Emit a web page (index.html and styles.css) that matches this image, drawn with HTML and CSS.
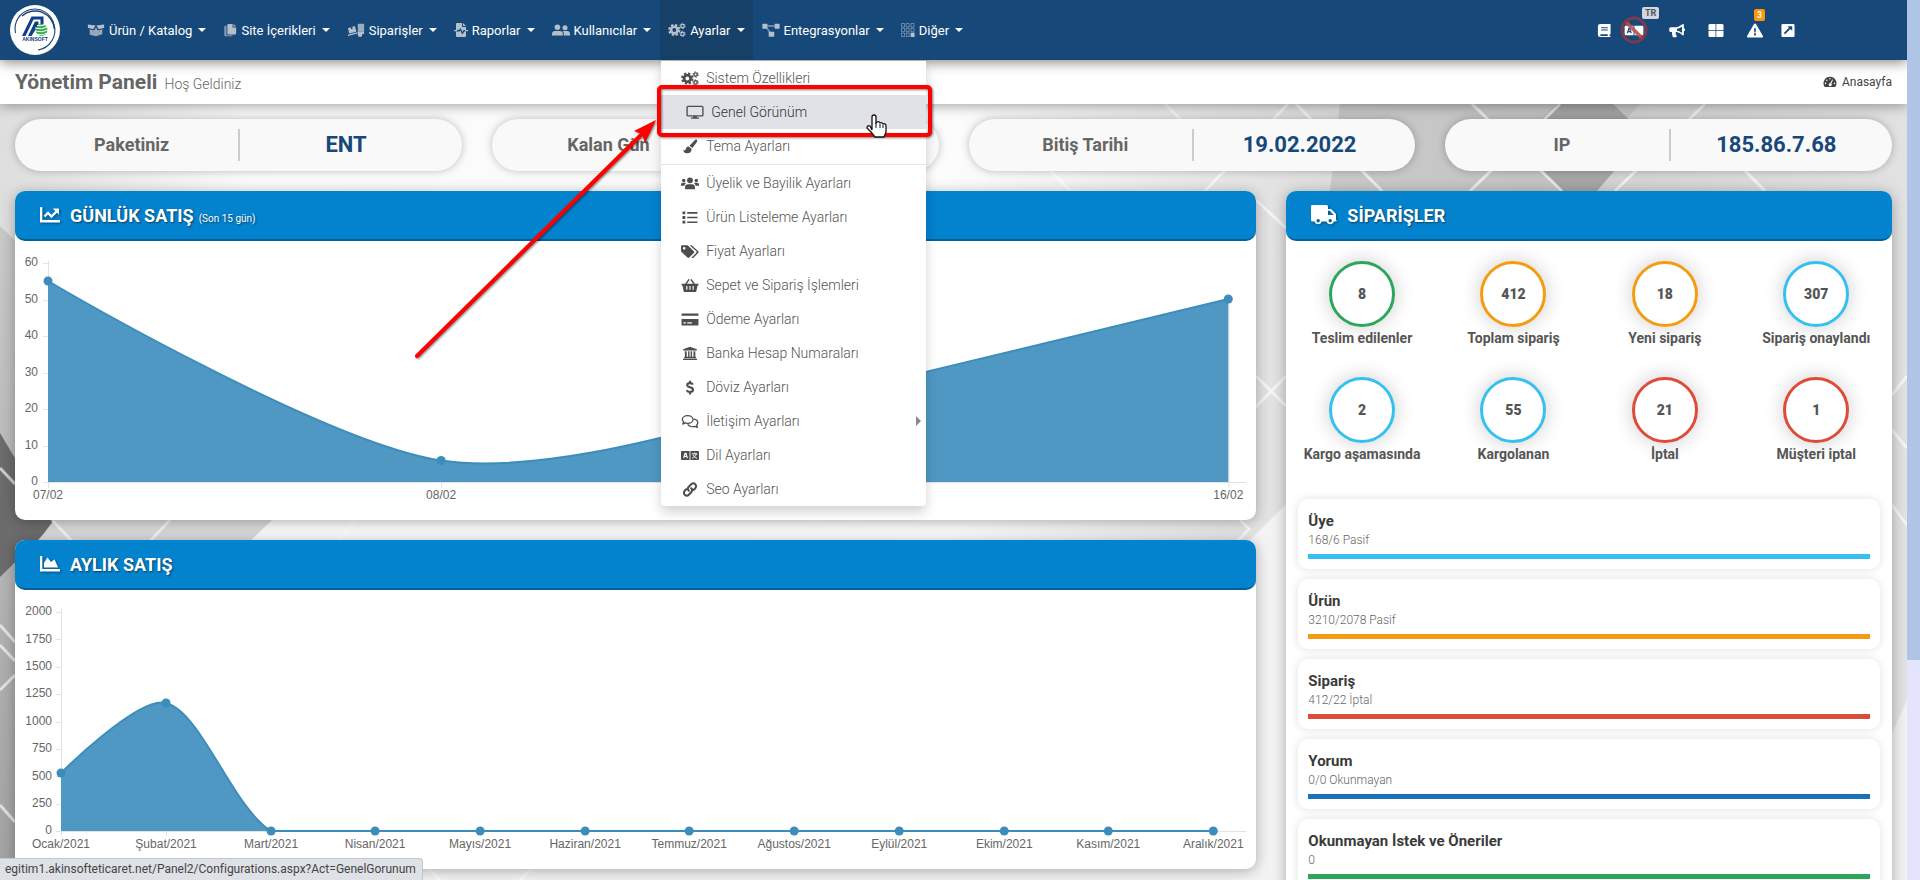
FILE: index.html
```html
<!DOCTYPE html>
<html lang="tr">
<head>
<meta charset="utf-8">
<meta name="viewport" content="width=device-width, initial-scale=1">
<title>Yönetim Paneli</title>
<link rel="stylesheet" href="styles.css">
</head>
<body>
<svg class="sprite" aria-hidden="true">
  <symbol id="i-cogs" viewBox="0 0 20 16">
    <circle cx="7" cy="8" r="3.6" fill="none" stroke="currentColor" stroke-width="3"/>
    <circle cx="7" cy="8" r="5.6" fill="none" stroke="currentColor" stroke-width="2.4" stroke-dasharray="2.6 1.8"/>
    <g fill="none" stroke="currentColor"><circle cx="16.2" cy="3.6" r="1.9" stroke-width="1.5"/><circle cx="16.2" cy="3.6" r="3" stroke-width="1" stroke-dasharray="1.6 1.54"/><circle cx="16.2" cy="12.4" r="1.9" stroke-width="1.5"/><circle cx="16.2" cy="12.4" r="3" stroke-width="1" stroke-dasharray="1.6 1.54"/></g>
  </symbol>
  <symbol id="i-box" viewBox="0 0 20 16">
    <path fill="currentColor" d="M1 2l8.6 1-2.300 3.600a1 1 0 0 1-1.100.4L1 5.700zM19 2l-8.600 1 2.300 3.600a1 1 0 0 0 1.100.4L19 5.700z"/>
    <path fill="currentColor" opacity=".8" d="M3 7.200l3.600 1a1.500 1.500 0 0 0 1.700-.6L10 5l1.700 2.600a1.500 1.500 0 0 0 1.700.6l3.600-1v5.600L10 15l-7-1.700z"/>
  </symbol>
  <symbol id="i-copy" viewBox="0 0 16 16">
    <path fill="currentColor" d="M6 1h5v4h4v7a1 1 0 0 1-1 1H6a1 1 0 0 1-1-1V2a1 1 0 0 1 1-1zM12 1l3 3h-3z"/>
    <path fill="currentColor" opacity=".7" d="M4 3H2.500a1 1 0 0 0-1 1v10a1 1 0 0 0 1 1H10a1 1 0 0 0 1-1H5a1 1 0 0 1-1-1z"/>
  </symbol>
  <symbol id="i-dolly" viewBox="0 0 20 16">
    <path fill="currentColor" opacity=".85" d="M13 1h5a1 1 0 0 1 1 1v8h-7V2a1 1 0 0 1 1-1z"/>
    <path fill="currentColor" d="M1 6l3-1 .6 2 1.800-.5-.6-2 3-1L10.400 10 2.500 12zM.8 13.200L11.600 10.400V12L1.200 14.800zM12 10h7v2.500h-2.200a2.500 2.500 0 1 1-4.800.3z"/>
  </symbol>
  <symbol id="i-report" viewBox="0 0 14 16">
    <path fill="currentColor" d="M3 1h5v4h4v3H9.500L8.500 10 6.500 6 5 8H2V2a1 1 0 0 1 1-1zM9 1l3 3H9zM2 9.500h3.500l.8-1L8.300 12.500l2-3H12V14a1 1 0 0 1-1 1H3a1 1 0 0 1-1-1z"/>
    <path fill="currentColor" d="M0 8h3v1.200H0zM11 8h3v1.200h-3z"/>
  </symbol>
  <symbol id="i-friends" viewBox="0 0 20 16">
    <circle cx="6" cy="5" r="3.100" fill="currentColor"/><circle cx="14.500" cy="5.400" r="2.800" fill="currentColor"/>
    <path fill="currentColor" d="M0 14v-1.600A3.400 3.400 0 0 1 3.400 9h5.200a3.400 3.400 0 0 1 3.400 3.400V14zM13 14v-2a5 5 0 0 0-1-3h4.800a3.200 3.200 0 0 1 3.200 3.200V14z"/>
  </symbol>
  <symbol id="i-project" viewBox="0 0 20 16">
    <path fill="currentColor" d="M1 1h4.500a.6.600 0 0 1 .6.600v4.300a.6.600 0 0 1-.6.600H1a.6.600 0 0 1-.6-.6V1.600A.6.600 0 0 1 1 1zM14.600 1H19a.6.600 0 0 1 .6.600v4.300a.6.600 0 0 1-.6.600h-4.400a.6.600 0 0 1-.6-.6V1.600a.6.600 0 0 1 .6-.6zM8 10h5a.6.600 0 0 1 .6.600v4.400a.6.600 0 0 1-.6.600H8a.6.600 0 0 1-.6-.6v-4.400A.6.600 0 0 1 8 10z"/>
    <path fill="none" stroke="currentColor" stroke-width="1.600" opacity=".7" d="M6 3.500h8M5.500 6l3.300 4.600"/>
  </symbol>
  <symbol id="i-grid" viewBox="0 0 14 16">
    <path fill="none" stroke="currentColor" stroke-width=".7" opacity=".75" d="M.5 1.500h3v3.500h-3zM5.200 1.500h3v3.500h-3zM10 1.500h3v3.500h-3zM.5 6.200h3v3.500h-3zM5.200 6.200h3v3.500h-3zM10 6.200h3v3.500h-3zM.5 11h3v3.500h-3zM5.200 11h3v3.500h-3z"/>
    <path fill="currentColor" d="M9.600 10.600h4v4.400h-4z"/>
  </symbol>
  <symbol id="i-desktop" viewBox="0 0 20 16">
    <rect x="1.200" y="1.200" width="17.600" height="10.600" rx="1" fill="none" stroke="currentColor" stroke-width="1.500"/>
    <path fill="currentColor" d="M8 12h4v1.500h2.500V15h-9v-1.500H8z"/>
  </symbol>
  <symbol id="i-brush" viewBox="0 0 16 16">
    <path fill="currentColor" d="M15.200.9c.7.600.6 1.400.1 2.200L10.600 9.600 7.400 7.200 13 1.400c.7-.7 1.500-1 2.200-.5zM6.600 8l3.100 2.300c.2 3-2 5-5 5C2 15.300.9 13 .8 11.600c2 1.300 2.600-.3 2.900-1.600C4.100 8.600 5.300 8 6.600 8z"/>
  </symbol>
  <symbol id="i-users" viewBox="0 0 20 16">
    <g fill="currentColor"><circle cx="10" cy="4.500" r="3.200"/><circle cx="3" cy="4.600" r="1.900"/><circle cx="17" cy="4.600" r="1.900"/>
    <path d="M4.500 14.500v-2.300A3.400 3.400 0 0 1 7.900 8.800h4.200a3.400 3.400 0 0 1 3.400 3.400v2.300zM0 10.500V9.200a2 2 0 0 1 2-2h2.200c.5 0 1 .2 1.300.5A5 5 0 0 0 3.700 10.500zM20 10.500V9.200a2 2 0 0 0-2-2h-2.200c-.5 0-1 .2-1.300.5a5 5 0 0 1 1.800 2.800z"/></g>
  </symbol>
  <symbol id="i-list" viewBox="0 0 16 16">
    <path fill="currentColor" d="M0 1.500h3v3H0zM0 6.500h3v3H0zM0 11.500h3v3H0zM5 2.200h11v1.700H5zM5 7.200h11v1.700H5zM5 12.200h11v1.700H5z"/>
  </symbol>
  <symbol id="i-tags" viewBox="0 0 20 16">
    <path fill="currentColor" fill-rule="evenodd" d="M0 2.300A1.300 1.300 0 0 1 1.300 1h5.400c.4 0 .8.200 1 .4l6.600 6.300a1.300 1.300 0 0 1 0 1.900l-5.200 5.200a1.300 1.300 0 0 1-1.900 0L.4 8.300a1.300 1.300 0 0 1-.4-1zM3.500 3a1.500 1.500 0 1 0 0 3 1.500 1.500 0 0 0 0-3z"/>
    <path fill="currentColor" d="M9.500 1h1.700c.4 0 .7.200 1 .4l6.900 6.300a1.300 1.300 0 0 1 0 1.900l-5.300 5.300a1.300 1.300 0 0 1-1.800 0l-.2-.2 5-5a1.700 1.700 0 0 0 0-2.300z"/>
  </symbol>
  <symbol id="i-basket" viewBox="0 0 18 16">
    <path fill="none" stroke="currentColor" stroke-width="1.600" d="M4.500 6.500L8 1.500M13.500 6.500L10 1.500"/>
    <path fill="currentColor" fill-rule="evenodd" d="M0 6h18v2h-1l-1.300 6.300a1 1 0 0 1-1 .7H3.300a1 1 0 0 1-1-.7L1 8H0zM5 8.500v4h1.200v-4zM8.400 8.500v4h1.200v-4zM11.800 8.500v4H13v-4z"/>
  </symbol>
  <symbol id="i-card" viewBox="0 0 18 16">
    <path fill="currentColor" fill-rule="evenodd" d="M1 1.500h16a1 1 0 0 1 1 1V4H0V2.500a1 1 0 0 1 1-1zM0 7.500h18v6a1 1 0 0 1-1 1H1a1 1 0 0 1-1-1zM2 11v1.300h2.500V11zM6 11v1.300h5V11z"/>
  </symbol>
  <symbol id="i-bank" viewBox="0 0 16 16">
    <path fill="currentColor" d="M8 .8L15.300 3.500v1.300H.7V3.500zM2.500 5.500h2v6h1.500v-6h1.500v6h1.200v-6h1.500v6h1.500v-6h2v6l.8.500v1H1.700v-1l.8-.5zM.5 13.700h15V15H.5z"/>
  </symbol>
  <symbol id="i-dollar" viewBox="0 0 16 16">
    <path fill="none" stroke="currentColor" stroke-width="2.200" d="M11 5c-.5-1.300-1.700-1.700-3-1.700-1.900 0-3 .9-3 2.100 0 3.200 6.200 1.700 6.200 5 0 1.400-1.200 2.300-3.200 2.300-1.700 0-2.900-.7-3.400-2M8 .7V3.500M8 12.500v2.900"/>
  </symbol>
  <symbol id="i-chat" viewBox="0 0 18 16">
    <path fill="none" stroke="currentColor" stroke-width="1.400" stroke-linejoin="round" d="M6.500 1.700c3.200 0 5.700 1.800 5.700 4.100s-2.500 4.100-5.700 4.100c-.9 0-1.700-.1-2.400-.4L1.300 10.700 2.300 8.300C1.300 7.600.8 6.800.8 5.800c0-2.300 2.500-4.100 5.700-4.100zM13 5.500c2.500.3 4.300 1.900 4.300 3.900 0 1-.5 1.800-1.300 2.500l.9 2.300-2.700-1.100c-3 1-6.400.1-7.700-2"/>
  </symbol>
  <symbol id="i-lang" viewBox="0 0 20 16">
    <path fill="currentColor" fill-rule="evenodd" d="M1 3h8.500v10H1a1 1 0 0 1-1-1V4a1 1 0 0 1 1-1zM4 5L2.300 11h1.300l.3-1.200h2.200l.3 1.200h1.300L6 5zM5 6.500l.6 2.100H4.400zM10.500 3H19a1 1 0 0 1 1 1v8a1 1 0 0 1-1 1h-8.500z"/>
    <path fill="none" class="knock" stroke-width="1.100" d="M12 6.200h6.200M15.100 4.700v1.500M17 6.200c-.6 2.400-2.400 4-4.600 4.900M13.500 7.500c.8 1.700 2.200 2.900 4.300 3.600"/>
  </symbol>
  <symbol id="i-link" viewBox="0 0 16 16">
    <path fill="none" stroke="currentColor" stroke-width="2.200" stroke-linecap="round" d="M6.700 9.300a3 3 0 0 1 0-4.200l2.600-2.700a3 3 0 0 1 4.300 4.200l-1.500 1.600M9.300 6.700a3 3 0 0 1 0 4.200l-2.600 2.700a3 3 0 0 1-4.300-4.200l1.500-1.600"/>
  </symbol>
  <symbol id="i-book" viewBox="0 0 14 16">
    <path fill="currentColor" fill-rule="evenodd" d="M3 1h11v11h-1v2h1v1H3a2.500 2.500 0 0 1-2.500-2.500v-9A2.500 2.500 0 0 1 3 1zM4 4.500v1h7v-1zM4 7v1h7V7zM3.500 12a1 1 0 0 0 0 1.800H11V12z"/>
  </symbol>
  <symbol id="i-horn" viewBox="0 0 18 16">
    <path fill="currentColor" fill-rule="evenodd" d="M15.500 1c.5 0 .8.400.8.900V5.500a1.700 1.700 0 0 1 0 3.300v3.700c0 .7-.8 1.100-1.400.6l-2.300-1.800A8 8 0 0 0 8 9.700l-.4 0c-.2 1.500.2 2.800 1 3.900.5.600 0 1.600-.8 1.600H5.300a1 1 0 0 1-.9-.6c-.7-1.500-.9-3.200-.7-4.900H2.500A1.800 1.800 0 0 1 .7 8V6.200a1.800 1.800 0 0 1 1.800-1.800H8a8 8 0 0 0 4.600-1.700l2.300-1.500zM14.300 3.700l-.7.500A9.400 9.400 0 0 1 9 6v2.300a9 9 0 0 1 4.600 1.700l.7.500z"/>
  </symbol>
  <symbol id="i-table" viewBox="0 0 16 16">
    <path fill="currentColor" d="M1.500 1h6v6.500H0v-5A1.500 1.500 0 0 1 1.500 1zM8.300 1h6.200A1.500 1.500 0 0 1 16 2.500v5H8.300zM0 8.300h7.500V15h-6A1.500 1.500 0 0 1 0 13.500zM8.300 8.300H16v5.200a1.500 1.500 0 0 1-1.500 1.500H8.300z"/>
  </symbol>
  <symbol id="i-warn" viewBox="0 0 18 16">
    <path fill="currentColor" fill-rule="evenodd" d="M10.200 1.300l7.100 12.200a1.200 1.200 0 0 1-1.100 1.900H1.800a1.200 1.200 0 0 1-1.100-1.900L7.800 1.300a1.400 1.400 0 0 1 2.400 0zM8 5.500l.3 4.700h1.400l.3-4.700zM9 11a1.200 1.200 0 1 0 0 2.400A1.200 1.200 0 0 0 9 11z"/>
  </symbol>
  <symbol id="i-external" viewBox="0 0 14 16">
    <path fill="currentColor" fill-rule="evenodd" d="M1.500 1h11A1.500 1.500 0 0 1 14 2.500v11a1.500 1.500 0 0 1-1.500 1.500h-11A1.500 1.500 0 0 1 0 13.500v-11A1.500 1.500 0 0 1 1.500 1zM6.500 3.500L8 5 2.500 10.600l1.400 1.500L9.500 6.500 11.500 8.300V3.500z"/>
  </symbol>
  <symbol id="i-gauge" viewBox="0 0 16 14">
    <path fill="currentColor" fill-rule="evenodd" d="M8 1a7.500 7.500 0 0 1 6.600 11.200c-.2.400-.5.500-.8.500H2.200c-.3 0-.6-.1-.8-.5A7.500 7.500 0 0 1 8 1zM8 2.300a.9.900 0 1 0 0 1.800.9.900 0 0 0 0-1.800zM4.200 4a.9.900 0 1 0 0 1.800.9.900 0 0 0 0-1.800zM2.800 7.700a.9.900 0 1 0 0 1.800.9.900 0 0 0 0-1.800zM13.200 7.700a.9.900 0 1 0 0 1.800.9.900 0 0 0 0-1.800zM10.600 4L8.200 8.500a1.700 1.700 0 1 0 1.300.5l2-4.500z"/>
  </symbol>
  <symbol id="i-line" viewBox="0 0 20 16">
    <path fill="currentColor" d="M0 0h2.300v13H20v2.500H0z"/>
    <path fill="none" stroke="currentColor" stroke-width="2.400" d="M4.500 9.500L8 6l3.500 3.500 5-5"/><path fill="currentColor" d="M12.800 1.500H19v6.200z"/>
  </symbol>
  <symbol id="i-area" viewBox="0 0 20 16">
    <path fill="currentColor" d="M0 0h2.300v13H20v2.500H0zM4 11.500V7l3.500-5.500L11 6l3.500-2.500 3.700 8z"/>
  </symbol>
  <symbol id="i-truck" viewBox="0 0 26 20">
    <path fill="currentColor" fill-rule="evenodd" d="M1.500 0h14A1.500 1.500 0 0 1 17 1.500V4h2.500c.4 0 .8.200 1.100.5l3.900 3.900c.3.300.5.700.5 1.100V15h.5v1.500h-2.800a3.600 3.600 0 0 1-7 0h-5a3.600 3.600 0 0 1-7 0H1.500A1.500 1.500 0 0 1 0 15V1.500A1.500 1.500 0 0 1 1.500 0zM17 5.800V10h5.800l-3.900-4.200zM7.200 14a1.700 1.700 0 1 0 0 3.400 1.700 1.700 0 0 0 0-3.400zM19.200 14a1.700 1.700 0 1 0 0 3.400 1.700 1.700 0 0 0 0-3.400z"/>
  </symbol>
</svg>

<div class="window">
<div class="page">
  <svg class="backdrop" viewBox="0 0 1907 880" preserveAspectRatio="xMidYMid slice" aria-hidden="true">
    <defs>
      <linearGradient id="bg-base" x1="0" y1="0" x2="1" y2="0">
        <stop offset="0" stop-color="#dedede"/><stop offset=".13" stop-color="#fbfbfb"/><stop offset=".5" stop-color="#fcfcfc"/><stop offset=".62" stop-color="#e9e9e9"/><stop offset=".8" stop-color="#cfcfcf"/><stop offset="1" stop-color="#e2e2e2"/>
      </linearGradient>
      <linearGradient id="bg-left" x1="0" y1="0" x2="0" y2="1">
        <stop offset="0" stop-color="#c9c9c9"/><stop offset="1" stop-color="#a2a2a2"/>
      </linearGradient>
    </defs>
    <rect width="1907" height="880" fill="url(#bg-base)"/>
    <path fill="url(#bg-left)" d="M0 226L240 460 40 880H0z"/>
    <path fill="#6c6c6c" d="M0 433L54 524 0 577z"/>
    <path fill="#dadada" d="M54 520L38 541H250L272 520z"/>
    <path fill="#f3f3f3" d="M60 840H1300L1500 500V880H60zM1250 540L1290 500V880H1250z"/>
    <path fill="#bdbdbd" d="M1340 104H1640L1560 191H1330z" opacity=".6"/>
    <path fill="#a6a6a6" d="M1557 104H1613L1645 135 1597 191H1562L1515 145z"/>
    <path fill="#f1f1f1" d="M1880 760L1907 700V880H1880z"/>
    <g fill="none" stroke="#fff" stroke-width="3" opacity=".65">
      <path d="M1472 104L1562 191M1560 104L1470 191M1705 104L1615 191M1700 125L1765 191M1288 104L1205 191M1296 104L1382 191M1165 104L1185 124M1050 170L1070 191M1256 200L1286 228M1256 376L1286 406M1256 407L1286 376M1240 520L1249 529 1238 541M1892 430L1907 448M1892 505L1907 525M1892 395L1907 376M0 468L15 484M52 520L72 541M170 520L150 541M355 520L338 541M0 625L15 642M0 645L15 661M0 690L15 675M0 805L15 822M430 870L440 880M530 870L520 880"/>
    </g>
  </svg>

  <header class="navbar">
    <a class="logo" href="#" aria-label="Akınsoft">
      <svg viewBox="0 0 50 50">
        <circle cx="25" cy="25" r="25" fill="#fff"/>
        <path d="M5.500 28A19.500 19.500 0 0 1 44 19.500 20 20 0 0 1 28 45" fill="none" stroke="#17487a" stroke-width="1.100"/>
        <path d="M12 11A19.500 19.500 0 0 1 44.500 24" fill="none" stroke="#17487a" stroke-width="1.600"/>
        <path d="M12 31L21.500 11.500H33.500V19H30.500V14.500H23.500L15.500 31zM18 31L25 16.500H28.500V20L21.500 31z" fill="#113f86"/>
        <circle cx="31.500" cy="25" r="6" fill="#2fae4d"/>
        <path d="M25 23q6 2 13-1M25 26q7 2 13-1M26 29q6 2 12-1M27 20.500q5 1 9-1" stroke="#fff" stroke-width="1" fill="none"/>
        <text x="25" y="36" text-anchor="middle" class="logo-text">AKINSOFT</text>
      </svg>
    </a>
    <nav class="menu">
      <div class="menu-item"><button class="menu-btn" type="button"><svg class="i20"><use href="#i-box"/></svg>Ürün / Katalog<i class="caret"></i></button></div>
      <div class="menu-item"><button class="menu-btn" type="button"><svg class="i14"><use href="#i-copy"/></svg>Site İçerikleri<i class="caret"></i></button></div>
      <div class="menu-item"><button class="menu-btn" type="button"><svg class="i20"><use href="#i-dolly"/></svg>Siparişler<i class="caret"></i></button></div>
      <div class="menu-item"><button class="menu-btn" type="button"><svg class="i14"><use href="#i-report"/></svg>Raporlar<i class="caret"></i></button></div>
      <div class="menu-item"><button class="menu-btn" type="button"><svg class="i20"><use href="#i-friends"/></svg>Kullanıcılar<i class="caret"></i></button></div>
      <div class="menu-item open"><button class="menu-btn" type="button" aria-expanded="true"><svg class="i20"><use href="#i-cogs"/></svg>Ayarlar<i class="caret"></i></button>
        <ul class="dropdown">
          <li><a href="#"><svg><use href="#i-cogs"/></svg>Sistem Özellikleri</a></li>
          <li><a class="hover" href="#"><svg><use href="#i-desktop"/></svg>Genel Görünüm</a></li>
          <li><a href="#"><svg><use href="#i-brush"/></svg>Tema Ayarları</a></li>
          <li class="divider"></li>
          <li><a href="#"><svg><use href="#i-users"/></svg>Üyelik ve Bayilik Ayarları</a></li>
          <li><a href="#"><svg><use href="#i-list"/></svg>Ürün Listeleme Ayarları</a></li>
          <li><a href="#"><svg><use href="#i-tags"/></svg>Fiyat Ayarları</a></li>
          <li><a href="#"><svg><use href="#i-basket"/></svg>Sepet ve Sipariş İşlemleri</a></li>
          <li><a href="#"><svg><use href="#i-card"/></svg>Ödeme Ayarları</a></li>
          <li><a href="#"><svg><use href="#i-bank"/></svg>Banka Hesap Numaraları</a></li>
          <li><a href="#"><svg><use href="#i-dollar"/></svg>Döviz Ayarları</a></li>
          <li><a href="#"><svg><use href="#i-chat"/></svg>İletişim Ayarları<i class="sub"></i></a></li>
          <li><a href="#"><svg><use href="#i-lang"/></svg>Dil Ayarları</a></li>
          <li><a href="#"><svg><use href="#i-link"/></svg>Seo Ayarları</a></li>
        </ul>
      </div>
      <div class="menu-item"><button class="menu-btn" type="button"><svg class="i20"><use href="#i-project"/></svg>Entegrasyonlar<i class="caret"></i></button></div>
      <div class="menu-item"><button class="menu-btn" type="button"><svg class="i14"><use href="#i-grid"/></svg>Diğer<i class="caret"></i></button></div>
    </nav>
    <div class="tools">
      <button type="button" aria-label="Kılavuz"><svg class="t14"><use href="#i-book"/></svg></button>
      <button type="button" class="lang" aria-label="Dil"><svg class="t20"><use href="#i-lang"/></svg><svg class="ban" viewBox="0 0 28 28"><path d="M5 5L23 23" stroke="#b5504d" stroke-width="3.500"/><circle cx="14" cy="14" r="12" fill="none" stroke="#873a46" stroke-width="3"/></svg><span class="badge badge-tr">TR</span></button>
      <button type="button" aria-label="Duyurular"><svg class="t18"><use href="#i-horn"/></svg></button>
      <button type="button" aria-label="Modüller"><svg class="t16"><use href="#i-table"/></svg></button>
      <button type="button" aria-label="Uyarılar"><svg class="t18"><use href="#i-warn"/></svg><span class="badge badge-warn">3</span></button>
      <button type="button" aria-label="Siteye git"><svg class="t14"><use href="#i-external"/></svg></button>
    </div>
  </header>

  <div class="titlebar">
    <h1>Yönetim Paneli <small>Hoş Geldiniz</small></h1>
    <a class="crumb" href="#"><svg><use href="#i-gauge"/></svg>Anasayfa</a>
  </div>

  <main class="content">
    <section class="pill"><span>Paketiniz</span><b>ENT</b></section>
    <section class="pill"><span>Kalan Gün</span><b></b></section>
    <section class="pill"><span>Bitiş Tarihi</span><b>19.02.2022</b></section>
    <section class="pill"><span>IP</span><b>185.86.7.68</b></section>

    <div class="left">
      <section class="panel">
        <h2><svg class="i20"><use href="#i-line"/></svg>GÜNLÜK SATIŞ <small>(Son 15 gün)</small></h2>
        <svg class="chart" viewBox="0 0 1241 279">
          <path class="axis" d="M33.500 20V247M28 22.500h5M28 59.500h5M28 95.500h5M28 132.500h5M28 168.500h5M28 205.500h5M28 241.500H1231M426.500 242v5M819.500 242v5M1213.500 58V247"/>
          <path class="area" d="M33 40C33 40 308 202 426 219.500 539 236 702 180 819 153L1213 58V241H33z"/>
          <path class="line" d="M33 40C33 40 308 202 426 219.500 539 236 702 180 819 153L1213 58"/>
          <g class="dots"><circle cx="33" cy="40" r="4.500"/><circle cx="426" cy="219.500" r="4.500"/><circle cx="819" cy="153" r="4.500"/><circle cx="1213" cy="58" r="4.500"/></g>
          <g class="ylab"><text x="23" y="25">60</text><text x="23" y="62">50</text><text x="23" y="98">40</text><text x="23" y="135">30</text><text x="23" y="171">20</text><text x="23" y="208">10</text><text x="23" y="244">0</text></g>
          <g class="xlab"><text x="33" y="258">07/02</text><text x="426" y="258">08/02</text><text x="819" y="258">15/02</text><text x="1213" y="258">16/02</text></g>
        </svg>
      </section>
      <section class="panel">
        <h2><svg class="i20"><use href="#i-area"/></svg>AYLIK SATIŞ</h2>
        <svg class="chart" viewBox="0 0 1241 279">
          <path class="axis" d="M46.500 19V246M41 22.500h5M41 49.500h5M41 77.500h5M41 104.500h5M41 132.500h5M41 159.500h5M41 186.500h5M41 214.500h5M41 241.500H1231M151.500 241v5"/>
          <path class="area" d="M46 183C46 183 124 105 151 113 187 123 217 217 256 241H46z"/>
          <path class="line" d="M46 183C46 183 124 105 151 113 187 123 217 217 256 241H1198"/>
          <g class="dots"><circle cx="46" cy="183" r="4.500"/><circle cx="151" cy="113" r="4.500"/><circle cx="256" cy="241" r="4.500"/><circle cx="360" cy="241" r="4.500"/><circle cx="465" cy="241" r="4.500"/><circle cx="570" cy="241" r="4.500"/><circle cx="674" cy="241" r="4.500"/><circle cx="779" cy="241" r="4.500"/><circle cx="884" cy="241" r="4.500"/><circle cx="989" cy="241" r="4.500"/><circle cx="1093" cy="241" r="4.500"/><circle cx="1198" cy="241" r="4.500"/></g>
          <g class="ylab"><text x="37" y="25">2000</text><text x="37" y="53">1750</text><text x="37" y="80">1500</text><text x="37" y="107">1250</text><text x="37" y="135">1000</text><text x="37" y="162">750</text><text x="37" y="190">500</text><text x="37" y="217">250</text><text x="37" y="244">0</text></g>
          <g class="xlab"><text x="46" y="258">Ocak/2021</text><text x="151" y="258">Şubat/2021</text><text x="256" y="258">Mart/2021</text><text x="360" y="258">Nisan/2021</text><text x="465" y="258">Mayıs/2021</text><text x="570" y="258">Haziran/2021</text><text x="674" y="258">Temmuz/2021</text><text x="779" y="258">Ağustos/2021</text><text x="884" y="258">Eylül/2021</text><text x="989" y="258">Ekim/2021</text><text x="1093" y="258">Kasım/2021</text><text x="1198" y="258">Aralık/2021</text></g>
        </svg>
      </section>
    </div>

    <section class="panel right">
      <h2><svg class="truck"><use href="#i-truck"/></svg>SİPARİŞLER</h2>
      <div class="stats">
        <div class="stat green"><b>8</b><span>Teslim edilenler</span></div>
        <div class="stat orange"><b>412</b><span>Toplam sipariş</span></div>
        <div class="stat orange"><b>18</b><span>Yeni sipariş</span></div>
        <div class="stat cyan"><b>307</b><span>Sipariş onaylandı</span></div>
        <div class="stat cyan"><b>2</b><span>Kargo aşamasında</span></div>
        <div class="stat cyan"><b>55</b><span>Kargolanan</span></div>
        <div class="stat red"><b>21</b><span>İptal</span></div>
        <div class="stat red"><b>1</b><span>Müşteri iptal</span></div>
      </div>
      <div class="cards">
        <article class="card cyan"><h3>Üye</h3><p>168/6 Pasif</p><div class="bar"></div></article>
        <article class="card orange"><h3>Ürün</h3><p>3210/2078 Pasif</p><div class="bar"></div></article>
        <article class="card red"><h3>Sipariş</h3><p>412/22 İptal</p><div class="bar"></div></article>
        <article class="card blue"><h3>Yorum</h3><p>0/0 Okunmayan</p><div class="bar"></div></article>
        <article class="card green"><h3>Okunmayan İstek ve Öneriler</h3><p>0</p><div class="bar"></div></article>
      </div>
    </section>
  </main>

  <svg class="marks" width="960" height="400" viewBox="0 0 960 400" aria-hidden="true">
    <g filter="drop-shadow(1px 1px 1px rgba(0,0,0,.5))">
      <rect x="659" y="87" width="271" height="48" rx="3" fill="none" stroke="#fe0000" stroke-width="4"/>
      <path d="M417 356L642 134" stroke="#fe0000" stroke-width="4" stroke-linecap="round"/>
      <path d="M656 120L634 131 642 134 645 143z" fill="#fe0000"/>
    </g>
    <path d="M872 130V117a2 2 0 0 1 4 0v6l1-1q2-1 3 1 2-1 3 1 3-1 3 2v6l-2 5h-9l-4-5-4-4q0-3 3-2z" fill="#fff" stroke="#111" stroke-width="1.300"/>
    <path d="M876 123v5M880 124v4M883 125v3" stroke="#111" stroke-width="1"/>
  </svg>
  <div class="status">egitim1.akinsofteticaret.net/Panel2/Configurations.aspx?Act=GenelGorunum</div>
</div>
<div class="scroll"><div class="thumb"></div></div>
</div>
</body>
</html>
```
FILE: styles.css
```css
* { box-sizing: border-box; }
body {
  margin: 0;
  font-family: Roboto, "Open Sans", sans-serif;
  font-size: 14px;
  color: #555;
}
a { color: inherit; text-decoration: none; }
button { font: inherit; color: inherit; border: 0; background: none; padding: 0; }
h1, h2, h3, p, ul { margin: 0; padding: 0; }
.sprite { position: absolute; width: 0; height: 0; }

.window { display: flex; height: 100vh; overflow: hidden; }
.page { position: relative; flex: 1; overflow: hidden; }
.scroll { width: 13px; background: #e4e4fc; }
.thumb { height: 75%; background: #b0c5e5; }
.backdrop { position: absolute; inset: 0; width: 100%; height: 100%; z-index: -1; }

/* top navigation */
.navbar {
  position: relative;
  z-index: 3;
  display: flex;
  height: 60px;
  padding: 0 112px 0 10px;
  background: #17487a;
  color: #fff;
  box-shadow: 0 2px 12px rgba(0, 0, 0, .5);
}
.logo { align-self: center; width: 50px; height: 50px; margin-right: 19px; }
.logo-text { font: 900 5px "Liberation Sans", sans-serif; fill: #0f3f78; }
.menu { display: flex; gap: 1px; font-size: 13px; }
.menu-item { position: relative; }
.menu-btn { display: flex; align-items: center; gap: 4px; height: 60px; padding: 0 8px; white-space: nowrap; }
.menu-btn svg { height: 16px; color: #b4bfcc; }
.i14 { width: 14px; }
.i20 { width: 18px; }
.caret { margin-left: 2px; border: 4px solid transparent; border-top-color: #fff; border-bottom: 0; }
.open .menu-btn { background: #164068; }

.dropdown {
  position: absolute;
  left: 1px;
  top: 61px;
  width: 265px;
  list-style: none;
  background: #fff;
  color: #555;
  border-radius: 0 0 4px 4px;
  box-shadow: 0 6px 12px rgba(0, 0, 0, .18);
  font-size: 14px;
  font-weight: 300;
}
.dropdown a { position: relative; display: flex; align-items: center; gap: 7px; height: 34px; padding-left: 20px; }
.dropdown svg { width: 18px; height: 15px; color: #4d4d4d; }
.dropdown .hover { padding-left: 25px; background: #e1e2e7; color: #333; }
.divider { height: 1px; margin: 1px 0; background: #e5e5e5; }
.sub { margin: 0 5px 0 auto; border: 5px solid transparent; border-left-color: #888; border-right: 0; }
.knock { stroke: #fff; }

.tools { display: flex; align-items: center; gap: 17px; margin-left: auto; }
.tools button { position: relative; display: flex; }
.tools svg { height: 15px; }
.tools .t14 { width: 14px; }
.tools .t16 { width: 16px; margin: 0 5px; }
.tools .t18 { width: 18px; }
.tools .t20 { width: 20px; }
.tools .lang { margin: 0 7px 0 -4px; }
.tools .knock { stroke: #17487a; }
.tools .ban { position: absolute; left: -4px; top: -7px; width: 28px; height: 28px; opacity: .9; }
.badge { position: absolute; padding: 0 3px; border-radius: 2px; font-size: 9px; line-height: 12px; font-weight: 700; color: #fff; }
.badge-tr { left: 18px; top: -16px; background: #d2d6de; color: #555; }
.badge-warn { left: 8px; top: -14px; background: #ff9800; }

/* page title */
.titlebar {
  position: relative;
  z-index: 2;
  display: flex;
  justify-content: space-between;
  align-items: center;
  height: 44px;
  padding: 0 15px;
  background: #fff;
  box-shadow: 0 2px 12px rgba(0, 0, 0, .35);
}
h1 { font-size: 21px; font-weight: 700; color: #666; }
h1 small { margin-left: 2px; font-size: 14px; font-weight: 300; }
.crumb { display: flex; align-items: center; gap: 5px; font-size: 12px; color: #444; }
.crumb svg { width: 14px; height: 12px; }

/* dashboard */
.content { display: grid; grid-template-columns: repeat(12, 1fr); gap: 20px 30px; padding: 15px; align-items: start; }
.pill {
  grid-column: span 3;
  display: grid;
  grid-template-columns: 1fr 1fr;
  align-items: center;
  height: 52px;
  border-radius: 26px;
  background: #f9f9f9;
  box-shadow: 0 0 8px rgba(0, 0, 0, .25);
  text-align: center;
  font-size: 18px;
  font-weight: 700;
  line-height: 32px;
  color: #666;
}
.pill span { padding-left: 10px; }
.pill b { height: 32px; border-left: 2px solid #ccc; padding-right: 10px; font-size: 22px; font-weight: 700; color: #17487a; }
.left { grid-column: span 8; display: grid; gap: 20px; }
.right { grid-column: span 4; }
.panel { background: #fff; border-radius: 10px; box-shadow: 0 2px 14px rgba(0, 0, 0, .3); }
h2 {
  display: flex;
  align-items: center;
  gap: 10px;
  height: 50px;
  padding-left: 25px;
  border-radius: 10px;
  background: #0382ce;
  border-bottom: 2px solid #045f9c;
  font-size: 18px;
  font-weight: 700;
  color: #fff;
  text-shadow: 1px 1px 2px rgba(0, 0, 0, .5);
}
h2 svg { height: 16px; filter: drop-shadow(1px 1px 1px rgba(0, 0, 0, .4)); }
h2 .i20 { width: 20px; }
h2 small { margin-left: -5px; padding-top: 6px; font-size: 10px; font-weight: 400; }
h2 .truck { width: 26px; height: 20px; }

.chart { display: block; width: 100%; font: 12px "Liberation Sans", Arial, sans-serif; }
.axis { fill: none; stroke: #e3e3e3; }
.area { fill: #3c8dbc; opacity: .9; }
.line { fill: none; stroke: #3c8dbc; stroke-width: 2; }
.dots { fill: #3c8dbc; }
.chart text { fill: #666; }
.ylab { text-anchor: end; }
.xlab { text-anchor: middle; }

.green { --c: #2ca65a; }
.orange { --c: #f39c12; }
.cyan { --c: #35c0ef; }
.red { --c: #dd4b39; }
.blue { --c: #1a72b8; }
.stats { display: grid; grid-template-columns: repeat(4, 1fr); gap: 28px 0; padding: 20px 0 34px; }
.stat { display: flex; flex-direction: column; align-items: center; font-weight: 700; line-height: 22px; color: #555; }
.stat b {
  width: 66px;
  height: 66px;
  border: 3px solid var(--c);
  border-radius: 50%;
  box-shadow: 0 0 20px rgba(0, 0, 0, .2);
  text-align: center;
  line-height: 60px;
}
.cards { display: grid; gap: 10px; padding: 0 12px 12px; }
.card { height: 70px; padding: 12px 10px 10px; border-radius: 10px; background: #fff; box-shadow: 0 0 10px rgba(0, 0, 0, .12); }
.card h3 { font-size: 15px; line-height: 20px; font-weight: 700; color: #3a3a3a; }
.card p { font-size: 12px; line-height: 18px; font-weight: 300; color: #666; }
.bar { height: 5px; margin-top: 5px; background: var(--c); }

.marks { position: absolute; left: 0; top: 0; z-index: 4; pointer-events: none; }
.status {
  position: absolute;
  left: 0;
  bottom: 0;
  z-index: 5;
  padding: 0 6px 0 5px;
  border: 1px solid #c4c7cc;
  border-width: 1px 1px 0 0;
  border-radius: 0 4px 0 0;
  background: #dee1e6;
  font-size: 12px;
  line-height: 21px;
  color: #444;
}
```
